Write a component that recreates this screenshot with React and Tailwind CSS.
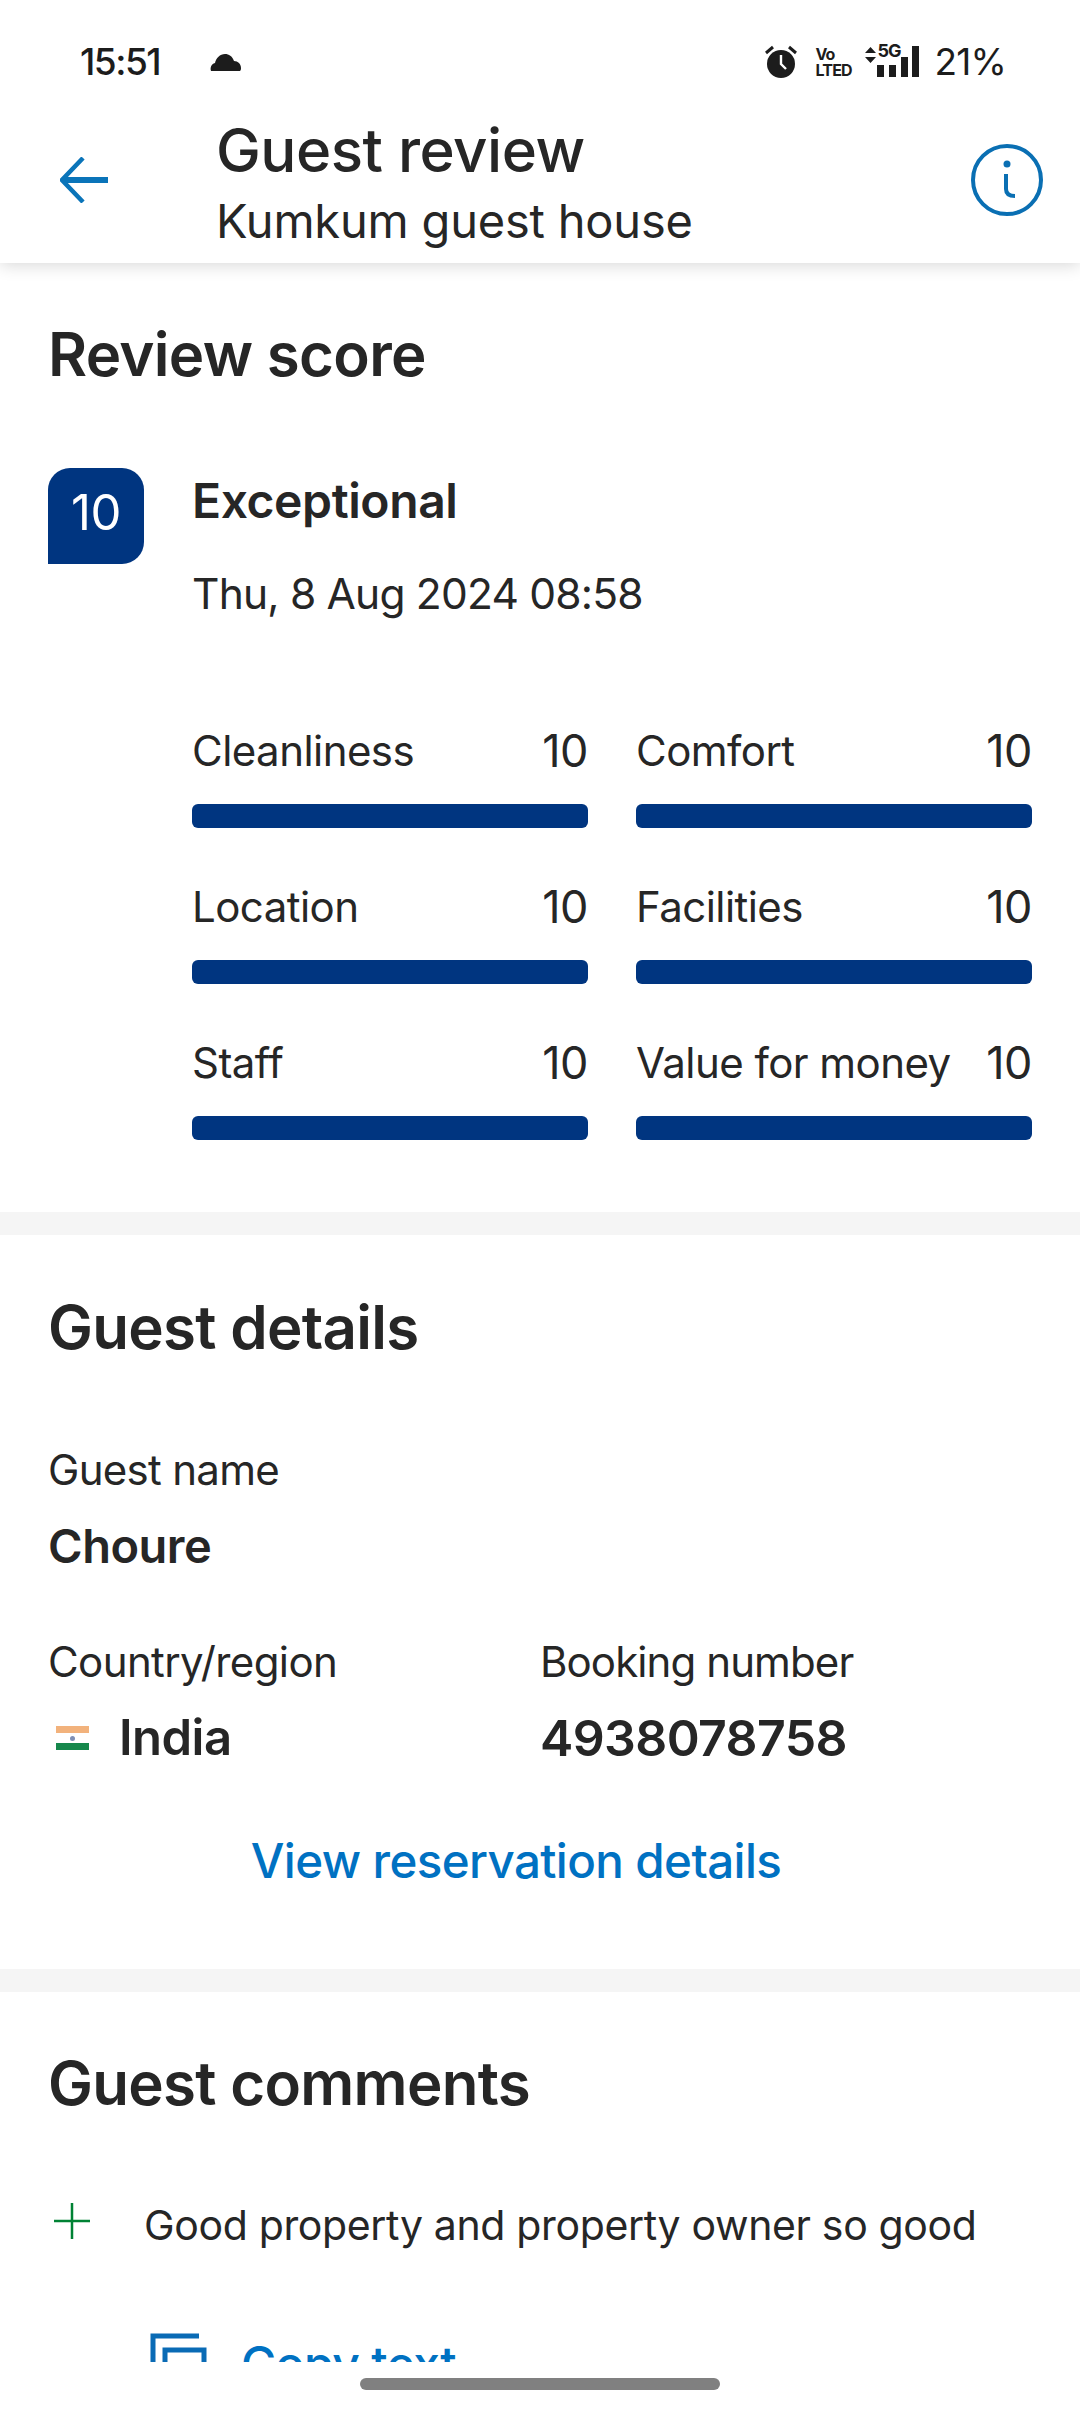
const FONT = "font-['Inter','Liberation_Sans',sans-serif]";

function Scores() {
  const rows = [
    ["Cleanliness", "Comfort"],
    ["Location", "Facilities"],
    ["Staff", "Value for money"],
  ];
  return (
    <div className="mt-[99px] ml-[144px] flex flex-col gap-[49px]">
      {rows.map((r) => (
        <div key={r[0]} className="grid grid-cols-2 gap-x-[48px]">
          {r.map((label) => (
            <div key={label}>
              <div className="flex h-[56px] items-center justify-between pt-[3px] text-[42px] tracking-[-0.55px] text-[#262626]">
                <span>{label}</span>
                <span className="text-[45px] tracking-[-0.5px]">10</span>
              </div>
              <div className="mt-[27px] h-[24px] rounded-[6px] bg-[#003580]" />
            </div>
          ))}
        </div>
      ))}
    </div>
  );
}

export default function App() {
  return (
    <div className={`${FONT} flex h-[2411px] w-[1080px] flex-col overflow-hidden bg-white text-[#262626]`}>
      <header className="relative z-10 h-[263px] shrink-0 bg-white shadow-[0_2px_16px_rgba(0,0,0,0.16)]">
        <div className="flex h-[108px] items-start justify-between pt-[36px] pl-[80px] pr-[74px]">
          <div className="flex h-[52px] items-center">
            <span className="text-[37px] font-medium tracking-[-1.5px] text-[#1c1c1c]">15:51</span>
            <svg className="ml-[50px]" width="32" height="20" viewBox="0 0 32 20">
              <path d="M1 19c-1-3 0-7 4-8 1-5 5-9 10-9 4 0 7 2 9 7 4 0 7 3 7 7 0 1 0 2-1 3z" fill="#1c1c1c" />
            </svg>
          </div>
          <div className="flex h-[52px] items-center">
            <svg width="32" height="34" viewBox="0 0 32 34">
              <circle cx="16" cy="19" r="14" fill="#1c1c1c" />
              <path d="M16 10v9l5 5" stroke="#fff" strokeWidth="2.4" fill="none" />
              <path d="M1 8 8 2M31 8 24 2" stroke="#1c1c1c" strokeWidth="3" />
            </svg>
            <div className="ml-[18px] flex w-[36px] flex-col text-[16px] font-bold leading-[16px] tracking-[-0.8px] text-[#1c1c1c]">
              <span>Vo</span>
              <span>LTED</span>
            </div>
            <div className="ml-[14px] flex h-[34px] items-start">
              <svg className="mt-[2px]" width="11" height="16" viewBox="0 0 11 16">
                <path d="M5.5 0 11 6H0zM5.500 16 0 10h11z" fill="#1c1c1c" />
              </svg>
              <div className="relative ml-[1px] h-[32px] w-[42px]">
                <span className="absolute left-0 -top-[3px] text-[18px] font-bold leading-[18px] tracking-[-1px] text-[#1c1c1c]">5G</span>
                <div className="absolute inset-0 flex items-end justify-between">
                  <i className="h-[12px] w-[7px] bg-[#1c1c1c]" />
                  <i className="h-[12px] w-[7px] bg-[#1c1c1c]" />
                  <i className="h-[20px] w-[7px] bg-[#1c1c1c]" />
                  <i className="h-[31px] w-[7px] bg-[#1c1c1c]" />
                </div>
              </div>
            </div>
            <span className="ml-[15px] text-[37px] tracking-[-0.8px] text-[#1c1c1c]">21%</span>
          </div>
        </div>
        <div className="flex h-[155px] items-start">
          <svg className="ml-[60px] mt-[49px]" width="48" height="46" viewBox="0 0 48 46">
            <path d="M23 1 2 23l21 22" fill="none" stroke="#0a74b9" strokeWidth="4.500" />
            <path d="M3 23h45" stroke="#0a74b9" strokeWidth="6" />
          </svg>
          <div className="ml-[108px] flex flex-col pt-[9px]">
            <div className="h-[66px] text-[60px] font-[450] leading-[66px] tracking-[-0.5px] text-[#262626]">Guest review</div>
            <div className="mt-[10px] h-[56px] text-[47px] leading-[56px] tracking-[-0.2px] text-[#262626]">Kumkum guest house</div>
          </div>
          <svg className="ml-auto mr-[37px] mt-[36px]" width="72" height="72" viewBox="0 0 72 72">
            <circle cx="36" cy="36" r="34" fill="none" stroke="#0a6fb3" strokeWidth="4" />
            <circle cx="36" cy="20" r="3.500" fill="#0a6fb3" />
            <path d="M35 30v15c0 5 3 7 9 7" fill="none" stroke="#0a6fb3" strokeWidth="4" />
          </svg>
        </div>
      </header>

      <main className="h-[2099px] shrink-0 overflow-hidden">
        <section className="px-[48px] pt-[59px] pb-[72px]">
          <h2 className="h-[64px] text-[60px] font-semibold leading-[64px] tracking-[-0.7px]">Review score</h2>
          <div className="mt-[82px] flex">
            <div className="flex h-[96px] w-[96px] items-center justify-center rounded-t-[22px] rounded-br-[22px] bg-[#003580] pb-[6px] text-[49px] tracking-[-0.5px] text-white">
              10
            </div>
            <div className="ml-[48px]">
              <div className="mt-[5px] h-[56px] text-[48px] font-semibold leading-[56px] tracking-[-0.4px]">Exceptional</div>
              <div className="mt-[37px] h-[56px] text-[42.500px] leading-[56px] tracking-[-0.8px]">Thu, 8 Aug 2024 08:58</div>
            </div>
          </div>
          <Scores />
        </section>

        <div className="h-[23px] bg-[#f5f5f5]" />

        <section className="pl-[48px] pr-[96px] pt-[60px] pb-[80px]">
          <h2 className="h-[64px] text-[60px] font-semibold leading-[64px] tracking-[-0.7px]">Guest details</h2>
          <div className="mt-[83px] h-[56px] text-[42px] leading-[56px] tracking-[-0.7px]">Guest name</div>
          <div className="mt-[20px] h-[56px] text-[47px] font-semibold leading-[56px] tracking-[-0.5px]">Choure</div>
          <div className="mt-[60px] flex">
            <div className="w-[492px]">
              <div className="h-[56px] text-[42px] leading-[56px] tracking-[-0.6px]">Country/region</div>
              <div className="mt-[20px] flex h-[56px] items-center">
                <div className="ml-[8px] flex h-[24px] w-[33px] flex-col">
                  <i className="h-[7px] bg-[#f2b27c]" />
                  <i className="flex h-[10px] items-center justify-center bg-white">
                    <b className="h-[5px] w-[5px] rounded-full bg-[#7f8fb5]" />
                  </i>
                  <i className="h-[7px] bg-[#16884c]" />
                </div>
                <span className="ml-[30px] text-[49px] font-semibold tracking-[-0.5px]">India</span>
              </div>
            </div>
            <div>
              <div className="h-[56px] text-[42px] leading-[56px] tracking-[-0.9px]">Booking number</div>
              <div className="mt-[20px] h-[56px] text-[50px] font-semibold leading-[56px] tracking-[-0.6px]">4938078758</div>
            </div>
          </div>
          <div className="mt-[67px] flex h-[56px] justify-center text-[47.500px] font-medium leading-[56px] tracking-[-0.6px] text-[#0071c2]">
            View reservation details
          </div>
        </section>

        <div className="h-[23px] bg-[#f5f5f5]" />

        <section className="px-[48px] pt-[59px]">
          <h2 className="h-[64px] text-[60px] font-semibold leading-[64px] tracking-[-0.7px]">Guest comments</h2>
          <div className="mt-[83px] flex h-[56px] items-center">
            <svg className="mb-[10px] ml-[6px] shrink-0" width="36" height="36" viewBox="0 0 36 36">
              <path d="M18 0v36M0 18h36" stroke="#008234" strokeWidth="2.500" />
            </svg>
            <span className="ml-[54px] text-[41px] tracking-[-0.35px]">Good property and property owner so good</span>
          </div>
          <div className="ml-[102px] mt-[79px] flex items-start">
            <svg className="shrink-0" width="57" height="60" viewBox="0 0 57 60">
              <path d="M3 60V3h46" fill="none" stroke="#0a6bb5" strokeWidth="5" />
              <path d="M15 60V17h39v43" fill="none" stroke="#0a6bb5" strokeWidth="5" />
            </svg>
            <span className="ml-[34px] mt-[1px] text-[48px] font-medium leading-[60px] tracking-[-0.6px] text-[#0071c2]">Copy text</span>
          </div>
        </section>
      </main>

      <div className="flex h-[49px] shrink-0 justify-center bg-white pt-[16px]">
        <div className="h-[12px] w-[360px] rounded-full bg-[#808080]" />
      </div>
    </div>
  );
}
